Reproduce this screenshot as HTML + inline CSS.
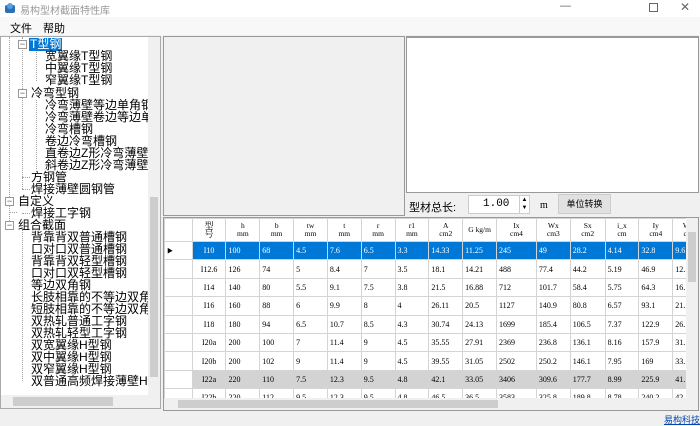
<!DOCTYPE html>
<html><head><meta charset="utf-8"><style>
*{margin:0;padding:0;box-sizing:border-box}
body{width:700px;height:426px;background:#f0f0f0;font-family:"Liberation Sans","Noto Sans CJK SC",sans-serif;position:relative;overflow:hidden;font-size:11px;color:#000}
.abs{position:absolute}
.tree div{position:absolute;white-space:nowrap;font-size:12px;line-height:13px}
.tree i{position:absolute;border-color:#a0a0a0;border-style:dotted;border-width:0}
.tree b{position:absolute;width:9px;height:9px;border:1px solid #999;background:#fff;font-size:9px;line-height:6px;text-align:center;font-weight:normal;color:#555}
table{border-collapse:collapse;font-family:"Liberation Serif","Noto Serif CJK SC",serif;font-size:8px}
td{border:1px solid #d4d4d4;height:18.4px;padding:0 2px;white-space:nowrap;overflow:hidden}
th{border:1px solid #d4d4d4;height:23px;font-weight:normal;font-size:7.5px;line-height:8px;text-align:center;background:#fff}
</style></head><body>
<div class="abs" style="left:0;top:0;width:700px;height:17px;background:#fff"></div>
<svg class="abs" style="left:4px;top:2px" width="12" height="12"><rect x="1" y="3" width="10" height="8" fill="#2a6fb8" rx="2"/><circle cx="6" cy="4" r="3" fill="#5aa0e0"/></svg>
<div class="abs" style="left:20px;top:2px;color:#999;font-size:10px">易构型材截面特性库</div>
<div class="abs" style="left:560px;top:0;color:#666;font-size:11px">—</div>
<div class="abs" style="left:649px;top:3px;width:9px;height:9px;border:1px solid #666"></div>
<div class="abs" style="left:680px;top:0;color:#666;font-size:12px">✕</div>
<div class="abs" style="left:0;top:17px;width:700px;height:18px;background:#f8f8f8"></div>
<div class="abs" style="left:10px;top:20px;font-size:11px">文件</div>
<div class="abs" style="left:43px;top:20px;font-size:11px">帮助</div>

<!-- tree -->
<div class="abs" style="left:0;top:36px;width:161px;height:373px;background:#fff;border:1px solid #aaa;overflow:hidden">
<div class="tree">
<i style="left:8px;top:0;height:190px;border-left-width:1px"></i>
<i style="left:8px;top:170px;height:6px;width:8px;border-bottom-width:1px"></i>
<i style="left:21px;top:0;height:152px;border-left-width:1px"></i>
<i style="left:21px;top:140px;width:8px;border-top-width:1px"></i>
<i style="left:21px;top:152px;width:8px;border-top-width:1px"></i>
<i style="left:21px;top:176px;width:8px;border-top-width:1px"></i>
<i style="left:35px;top:11px;height:33px;border-left-width:1px"></i>
<i style="left:35px;top:63px;height:69px;border-left-width:1px"></i>
<i style="left:21px;top:192px;height:152px;border-left-width:1px"></i>
<b style="left:17px;top:3px">−</b>
<b style="left:17px;top:52px">−</b>
<b style="left:4px;top:160px">−</b>
<b style="left:4px;top:184px">−</b>
<div style="left:28px;top:1px;background:#0078d7;color:#fff;padding:0 1px">T型钢</div>
<div style="left:44px;top:13px">宽翼缘T型钢</div>
<div style="left:44px;top:25px">中翼缘T型钢</div>
<div style="left:44px;top:37px">窄翼缘T型钢</div>
<div style="left:30px;top:50px">冷弯型钢</div>
<div style="left:44px;top:62px">冷弯薄壁等边单角钢</div>
<div style="left:44px;top:74px">冷弯薄壁卷边等边单角钢</div>
<div style="left:44px;top:86px">冷弯槽钢</div>
<div style="left:44px;top:98px">卷边冷弯槽钢</div>
<div style="left:44px;top:110px">直卷边Z形冷弯薄壁型钢</div>
<div style="left:44px;top:122px">斜卷边Z形冷弯薄壁型钢</div>
<div style="left:30px;top:134px">方钢管</div>
<div style="left:30px;top:146px">焊接薄壁圆钢管</div>
<div style="left:17px;top:158px">自定义</div>
<div style="left:30px;top:170px">焊接工字钢</div>
<div style="left:17px;top:182px">组合截面</div>
<div style="left:30px;top:194px">背靠背双普通槽钢</div>
<div style="left:30px;top:206px">口对口双普通槽钢</div>
<div style="left:30px;top:218px">背靠背双轻型槽钢</div>
<div style="left:30px;top:230px">口对口双轻型槽钢</div>
<div style="left:30px;top:242px">等边双角钢</div>
<div style="left:30px;top:254px">长肢相靠的不等边双角钢</div>
<div style="left:30px;top:266px">短肢相靠的不等边双角钢</div>
<div style="left:30px;top:278px">双热轧普通工字钢</div>
<div style="left:30px;top:290px">双热轧轻型工字钢</div>
<div style="left:30px;top:302px">双宽翼缘H型钢</div>
<div style="left:30px;top:314px">双中翼缘H型钢</div>
<div style="left:30px;top:326px">双窄翼缘H型钢</div>
<div style="left:30px;top:338px">双普通高频焊接薄壁H型钢</div>
</div>
<div class="abs" style="left:147px;top:0;width:12px;height:358px;background:#f0f0f0"></div>
<div class="abs" style="left:149px;top:160px;width:8px;height:180px;background:#cdcdcd"></div>
<div class="abs" style="left:0;top:358px;width:159px;height:13px;background:#f0f0f0"></div>
<div class="abs" style="left:12px;top:360px;width:100px;height:9px;background:#cdcdcd"></div>
</div>

<!-- gray panel -->
<div class="abs" style="left:163px;top:36px;width:242px;height:180px;border:1px solid #999;background:#f0f0f0"></div>
<div class="abs" style="left:406px;top:36px;width:293px;height:157px;border:1px solid #999;background:#fff;border-top:2px solid #999"></div>
<div class="abs" style="left:409px;top:199px;font-size:11px">型材总长:</div>
<div class="abs" style="left:468px;top:195px;width:62px;height:19px;background:#fff;border:1px solid #ccc;font-family:'Liberation Mono',monospace;font-size:11px;padding:2px 0 0 14px">1.00</div>
<div class="abs" style="left:519px;top:196px;width:10px;height:17px;border-left:1px solid #ccc;font-size:6px;line-height:8px;text-align:center">▲<br>▼</div>
<div class="abs" style="left:540px;top:200px;font-family:'Liberation Serif',serif;font-size:10px">m</div>
<div class="abs" style="left:558px;top:194px;width:53px;height:20px;background:#e1e1e1;border:1px solid #ccc;font-size:9px;text-align:center;line-height:18px">单位转换</div>

<!-- grid -->
<div class="abs" style="left:163px;top:217px;width:536px;height:194px;border:1px solid #999;background:#fff;overflow:hidden">
<table class="abs" style="left:0;top:0;table-layout:fixed;width:540px">
<colgroup><col style="width:27px"><col style="width:33px"><col style="width:33px"><col style="width:33px"><col style="width:33px"><col style="width:33px"><col style="width:33px"><col style="width:33px"><col style="width:33px"><col style="width:33px"><col style="width:39px"><col style="width:33px"><col style="width:34px"><col style="width:33px"><col style="width:33px"><col style="width:30px"></colgroup>
<tr><th></th><th style="font-size:9px">型<br>号</th><th>h<br>mm</th><th>b<br>mm</th><th>tw<br>mm</th><th>t<br>mm</th><th>r<br>mm</th><th>r1<br>mm</th><th>A<br>cm2</th><th>G kg/m</th><th>Ix<br>cm4</th><th>Wx<br>cm3</th><th>Sx<br>cm2</th><th>i_x<br>cm</th><th>Iy<br>cm4</th><th>Wy<br>cm</th></tr>
<tr style="background:#0078d7;color:#fff"><td style="background:#fff;color:#000;font-size:6px">▶</td><td style="text-align:center">I10</td><td>100</td><td>68</td><td>4.5</td><td>7.6</td><td>6.5</td><td>3.3</td><td>14.33</td><td>11.25</td><td>245</td><td>49</td><td>28.2</td><td>4.14</td><td>32.8</td><td>9.6</td></tr>
<tr><td></td><td style="text-align:center">I12.6</td><td>126</td><td>74</td><td>5</td><td>8.4</td><td>7</td><td>3.5</td><td>18.1</td><td>14.21</td><td>488</td><td>77.4</td><td>44.2</td><td>5.19</td><td>46.9</td><td>12.</td></tr>
<tr><td></td><td style="text-align:center">I14</td><td>140</td><td>80</td><td>5.5</td><td>9.1</td><td>7.5</td><td>3.8</td><td>21.5</td><td>16.88</td><td>712</td><td>101.7</td><td>58.4</td><td>5.75</td><td>64.3</td><td>16.</td></tr>
<tr><td></td><td style="text-align:center">I16</td><td>160</td><td>88</td><td>6</td><td>9.9</td><td>8</td><td>4</td><td>26.11</td><td>20.5</td><td>1127</td><td>140.9</td><td>80.8</td><td>6.57</td><td>93.1</td><td>21.</td></tr>
<tr><td></td><td style="text-align:center">I18</td><td>180</td><td>94</td><td>6.5</td><td>10.7</td><td>8.5</td><td>4.3</td><td>30.74</td><td>24.13</td><td>1699</td><td>185.4</td><td>106.5</td><td>7.37</td><td>122.9</td><td>26.</td></tr>
<tr><td></td><td style="text-align:center">I20a</td><td>200</td><td>100</td><td>7</td><td>11.4</td><td>9</td><td>4.5</td><td>35.55</td><td>27.91</td><td>2369</td><td>236.8</td><td>136.1</td><td>8.16</td><td>157.9</td><td>31.</td></tr>
<tr><td></td><td style="text-align:center">I20b</td><td>200</td><td>102</td><td>9</td><td>11.4</td><td>9</td><td>4.5</td><td>39.55</td><td>31.05</td><td>2502</td><td>250.2</td><td>146.1</td><td>7.95</td><td>169</td><td>33.</td></tr>
<tr style="background:#d3d3d3"><td style="background:#fff"></td><td style="text-align:center">I22a</td><td>220</td><td>110</td><td>7.5</td><td>12.3</td><td>9.5</td><td>4.8</td><td>42.1</td><td>33.05</td><td>3406</td><td>309.6</td><td>177.7</td><td>8.99</td><td>225.9</td><td>41.</td></tr>
<tr><td></td><td style="text-align:center">I22b</td><td>220</td><td>112</td><td>9.5</td><td>12.3</td><td>9.5</td><td>4.8</td><td>46.5</td><td>36.5</td><td>3583</td><td>325.8</td><td>189.8</td><td>8.78</td><td>240.2</td><td>42.</td></tr>
</table>
<div class="abs" style="left:522px;top:0;width:12px;height:180px;background:#f0f0f0"></div>
<div class="abs" style="left:524px;top:14px;width:8px;height:50px;background:#cdcdcd"></div>
<div class="abs" style="left:0;top:180px;width:534px;height:12px;background:#f0f0f0"></div>
<div class="abs" style="left:14px;top:182px;width:320px;height:8px;background:#cdcdcd"></div>
</div>
<div class="abs" style="left:664px;top:413px;font-size:9px;color:#0645ad;text-decoration:underline">易构科技</div>
</body></html>
